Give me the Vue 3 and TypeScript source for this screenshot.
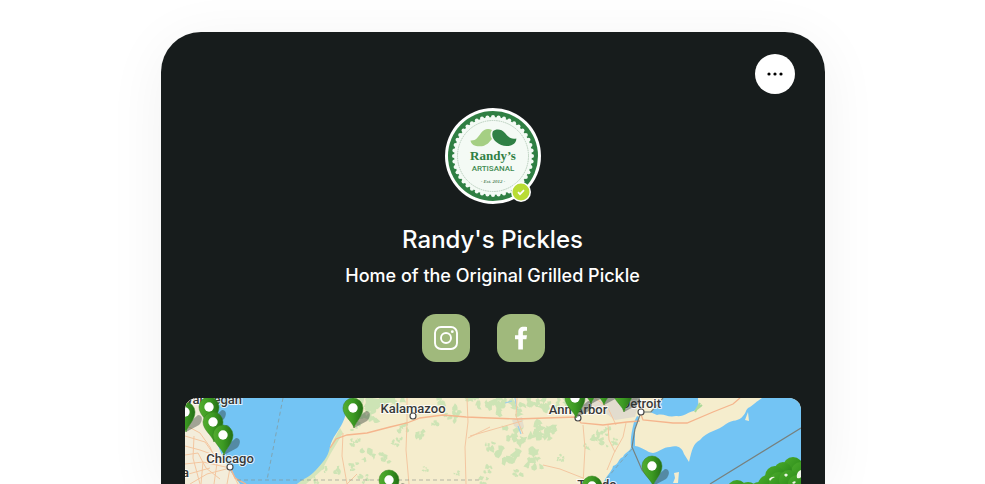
<script setup lang="ts">
interface Point { x: number; y: number }
interface Label extends Point { text: string; anchor: 'start' | 'middle' | 'end' }

const profile = {
  name: "Randy's Pickles",
  tagline: 'Home of the Original Grilled Pickle',
}

const labels: Label[] = [
  { text: 'Waukegan', x: 57, y: 6, anchor: 'end' },
  { text: 'Chicago', x: 45, y: 65, anchor: 'middle' },
  { text: 'Aurora', x: 4, y: 79, anchor: 'end' },
  { text: 'Kalamazoo', x: 228, y: 15, anchor: 'middle' },
  { text: 'Ann Arbor', x: 393, y: 16, anchor: 'middle' },
  { text: 'Detroit', x: 476, y: 10, anchor: 'end' },
  { text: 'Toledo', x: 412, y: 91, anchor: 'middle' },
]

const cities: Point[] = [
  { x: 45, y: 69 },
  { x: 228, y: 18 },
  { x: 393, y: 20 },
  { x: 456, y: 14 },
]

const pins: Point[] = [
  { x: 0, y: 14 }, { x: 24, y: 9 }, { x: 28, y: 24 }, { x: 38, y: 37 },
  { x: 168, y: 10 }, { x: 204, y: 82 },
  { x: 405, y: -14 }, { x: 418, y: -13 }, { x: 438, y: -6 }, { x: 390, y: 0 },
  { x: 407, y: 88 }, { x: 467, y: 68 },
]

// Overlapping pin heads, back to front, where stores sit too close to tell apart
const cluster: Array<Point & { r: number }> = [
  { x: 608, y: 69, r: 10 }, { x: 616, y: 74, r: 10 }, { x: 598, y: 73, r: 9 }, { x: 590, y: 78, r: 10 },
  { x: 552, y: 92, r: 10 }, { x: 563, y: 94, r: 10 }, { x: 574, y: 94, r: 10 }, { x: 583, y: 87, r: 10 },
  { x: 594, y: 84, r: 10 }, { x: 604, y: 82, r: 10 }, { x: 612, y: 86, r: 9 },
]

// Wooded areas over the land
const woods: Array<Point & { s: number }> = [
  { x: 180, y: 4, s: 14 }, { x: 197, y: 8, s: 13 }, { x: 185, y: 17, s: 9 }, { x: 212, y: 7, s: 10 },
  { x: 170, y: 45, s: 5 }, { x: 183, y: 57, s: 7 }, { x: 199, y: 60, s: 6 }, { x: 218, y: 30, s: 6 },
  { x: 232, y: 36, s: 7 }, { x: 212, y: 44, s: 5 }, { x: 268, y: 20, s: 8 }, { x: 249, y: 25, s: 5 },
  { x: 261, y: 3, s: 9 }, { x: 291, y: 5, s: 9 }, { x: 307, y: 8, s: 10 }, { x: 320, y: 4, s: 9 },
  { x: 337, y: 10, s: 10 }, { x: 352, y: 6, s: 9 }, { x: 365, y: 5, s: 9 }, { x: 377, y: 3, s: 7 },
  { x: 344, y: 31, s: 12 }, { x: 328, y: 37, s: 9 }, { x: 355, y: 40, s: 10 }, { x: 339, y: 49, s: 12 },
  { x: 322, y: 57, s: 10 }, { x: 307, y: 49, s: 6 }, { x: 348, y: 62, s: 9 }, { x: 364, y: 33, s: 7 },
  { x: 411, y: 39, s: 8 }, { x: 420, y: 34, s: 5 }, { x: 427, y: 45, s: 5 }, { x: 403, y: 48, s: 4 },
  { x: 302, y: 72, s: 5 }, { x: 297, y: 83, s: 5 }, { x: 169, y: 69, s: 5 }, { x: 178, y: 81, s: 5 },
  { x: 138, y: 72, s: 4 }, { x: 152, y: 73, s: 5 }, { x: 131, y: 82, s: 4 }, { x: 241, y: 71, s: 3 },
  { x: 375, y: 60, s: 4 }, { x: 334, y: 76, s: 5 }, { x: 272, y: 75, s: 3 }, { x: 172, y: 28, s: 5 },
]

// Repeatable pseudo-random sequence, so the woods look the same on every render
let seed = 11
const random = (): number => {
  seed = (seed * 16807) % 2147483647
  return seed / 2147483647
}

// Each wood is a loose group of small ragged blobs
const woodPath: string = woods
  .flatMap(({ x, y, s }) =>
    Array.from({ length: 7 }, () => {
      const cx = x + (random() * 2 - 1) * s
      const cy = y + (random() * 2 - 1) * s * 0.75
      const corners = Array.from({ length: 8 }, (_, i) => {
        const a = (i / 8) * Math.PI * 2
        const r = s * (0.12 + random() * 0.38)
        return `${(cx + Math.cos(a) * r).toFixed(1)} ${(cy + Math.sin(a) * r).toFixed(1)}`
      })
      return `M${corners.join('L')}Z`
    }),
  )
  .join('')

// Rounded teeth around the rim of the seal
const scallops: Point[] = Array.from({ length: 44 }, (_, i) => {
  const a = (i / 44) * Math.PI * 2
  return { x: 48 + 39 * Math.cos(a), y: 48 + 39 * Math.sin(a) }
})
</script>

<template>
  <div class="page">
    <main class="card">
      <header class="toolbar">
        <button class="more" type="button" aria-label="More options">
          <svg viewBox="0 0 16 4" width="16" height="4" aria-hidden="true">
            <circle cx="2" cy="2" r="1.6" /><circle cx="8" cy="2" r="1.6" /><circle cx="14" cy="2" r="1.6" />
          </svg>
        </button>
      </header>

      <div class="avatar">
        <svg class="seal" viewBox="0 0 96 96" role="img" aria-label="Randy's Artisanal">
          <circle cx="48" cy="48" r="48" fill="#fff" />
          <circle cx="48" cy="48" r="45" fill="#2f7f43" />
          <circle cx="48" cy="48" r="39" fill="#f4faf5" />
          <circle v-for="(p, i) in scallops" :key="i" :cx="p.x" :cy="p.y" r="2" fill="#f4faf5" />
          <circle cx="48" cy="48" r="35.5" fill="none" stroke="#a9c3ae" stroke-width=".8" stroke-dasharray="1.6 .7" />
          <path d="M25.500 32.500C31 33 33 29 36 25C39 21 43 20 47 22C45 24.500 45 28 47 31C45 33 43 37 37 38.200C31 39 26 37 25.500 32.500Z" fill="#a5cf83" />
          <path d="M47.800 23.500C51 20.500 56.500 21 60 25C63 28.500 65 31.500 71.300 30.500C71.500 35 67.500 38.300 61.500 38C53 37.500 45 30.500 47.800 23.500Z" fill="#2f8045" />
          <text class="seal-name" x="48" y="52" text-anchor="middle">Randy’s</text>
          <text class="seal-kind" x="48" y="63" text-anchor="middle">ARTISANAL</text>
          <text class="seal-date" x="48" y="75" text-anchor="middle">· Est. 2012 ·</text>
        </svg>
        <svg class="verified" viewBox="0 0 20 20" role="img" aria-label="Verified">
          <circle cx="10" cy="10" r="10" fill="#fff" />
          <circle cx="10" cy="10" r="8.500" fill="#b9dc35" />
          <path d="M7 10.200L9 12.200L13 8.200" fill="none" stroke="#fff" stroke-width="1.700" />
        </svg>
      </div>

      <h1 class="name">{{ profile.name }}</h1>
      <p class="tagline">{{ profile.tagline }}</p>

      <nav class="socials" aria-label="Social links">
        <a class="social" href="#instagram" aria-label="Instagram">
          <svg viewBox="0 0 24 24" width="24" height="24" fill="none" stroke="#fff" stroke-width="1.900" aria-hidden="true">
            <rect x="1" y="1" width="22" height="22" rx="6" />
            <circle cx="12" cy="12" r="5" />
            <circle cx="18.300" cy="5.700" r="1.400" fill="#fff" stroke="none" />
          </svg>
        </a>
        <a class="social" href="#facebook" aria-label="Facebook">
          <svg viewBox="0 0 24 24" width="24" height="24" fill="#fff" aria-hidden="true">
            <path d="M9.300 23.500V13.200H6V9.200H9.300V6.200C9.300 2.700 11.300 .800 14.600 .800C16 .800 17.200 .900 18 1.100V4.700H15.900C14.200 4.700 13.900 5.500 13.900 6.700V9.200H18L17.400 13.200H13.900V23.500Z" />
          </svg>
        </a>
      </nav>

      <svg class="map" viewBox="0 0 616 86" role="img" aria-label="Store locations map">
        <defs>
          <linearGradient id="pinFill" x1="0" x2="1" y1="0" y2="0">
            <stop offset="0" stop-color="#54ad31" /><stop offset=".5" stop-color="#3c9a22" /><stop offset="1" stop-color="#246f16" />
          </linearGradient>
          <linearGradient id="headFill" x1="0" x2="1" y1="0" y2="1">
            <stop offset="0" stop-color="#4cab2c" /><stop offset=".5" stop-color="#379720" /><stop offset="1" stop-color="#267a18" />
          </linearGradient>
          <g id="pin">
            <path d="M1 20L6 9L13 3C18 3 18 9 14 13Z" fill="#26352d" opacity=".4" />
            <path d="M1 20C-1 13-10 8-10 0A10 10 0 0 1 10 0C10 8 3 13 1 20Z" fill="url(#pinFill)" stroke="#34831f" stroke-width=".5" />
            <circle r="4.700" fill="#fff" />
          </g>
        </defs>

        <rect width="616" height="86" fill="#f5edcd" />
        <path :d="woodPath" fill="#bfe0ac" opacity=".75" />
        <path d="M0 0H20L30 40L40 58L52 86H0Z" fill="#f3eddb" />
        <path d="M380 0H455L450 19L430 22L419 14L402 10Z" fill="#e2dcce" />
        <path d="M327 22L337 19L339 29L334 31L329 28Z" fill="#e5ddca" />
        <path d="M155 30L145 49L132 68L112 86H121L137 72L146 55L158 35Z" fill="#d4e5ba" />

        <g fill="#73c4f4">
          <path d="M19 0H168C161 8 162 16 158 24C154 33 147 39 145 49C143 60 137 65 131 72C125 79 119 80 112 86H55C50 78 45 75 42 66C36 58 35 50 30 42C25 31 25 15 19 0Z" />
          <path d="M418 86C421 77 427 74 428 68C434 67 433 60 438 59C440 54 445 54 446 49C445 41 447 32 449 24L452 18L454 19L450 30L450 48C458 49 461 54 468 55C474 54 478 49 485 49C492 47 497 49 499 56L504 64C507 51 508 46 515 42C522 33 533 33 541 26C548 21 554 24 558 18C562 14 560 11 565 9C569 6 571 4 577 0H616V86Z" />
          <path d="M478 0C474 5 471 10 465 14L472 17C480 15 482 20 491 18C500 19 502 14 509 13C515 9 513 4 513 0Z" />
        </g>
        <path d="M330 0L332 12M320 5L327 3M333 28L336 36" fill="none" stroke="#9fcfe6" stroke-width="1.200" />
        <path d="M515 5L510 14M517 7L512 11" stroke="#a9d998" stroke-width="2" />
        <path d="M489 75L494 74L493 85H488L490 80ZM563 14L564 23L560 22Z" fill="#f5edcd" />

        <g fill="none" stroke="#f3c6a0" stroke-width="1">
          <path d="M0 48L15 52L29 57L45 64M0 66L18 64L45 70M5 86L22 76L45 70L42 86M0 27L15 35L25 49L32 65L29 86M9 38L8 60L15 86M45 70L53 86M0 57L13 55L21 70L35 81" />
          <path d="M158 35L157 58L162 86M162 86L172 76M222 0L222 24L221 52L224 86M282 0L283 24L280 49L281 86M305 29L283 40M332 0L331 18L338 36" />
          <path d="M398 27L400 50L398 86M423 27L424 42L430 54M358 67L375 71L398 80M441 25L438 39L429 55L422 72M410 0L423 10L431 27M285 38L320 28L337 23" />
          <path d="M0 38L20 44L30 58M18 64L16 86M0 77L25 70" />
        </g>
        <g fill="none" stroke="#f5b58d" stroke-width="1.300">
          <path d="M145 50L151 41L162 37L182 35L205 29L222 25L235 20L258 17L281 19L305 20L331 21L361 20L392 19L396 25L418 27L442 24L455 23" />
          <path d="M455 14L458 22L488 25L502 25L528 14L548 6L555 0" />
          <path d="M45 69L50 80L61 86" />
        </g>
        <path d="M98 0L82 82M52 82H297M447 51L417 86" fill="none" stroke="#888f87" stroke-width=".8" stroke-dasharray="4 3" opacity=".75" />
        <path d="M478 0L466 14L456 14L450 31L447 49L457 72L469 86M525 86L616 30" fill="none" stroke="#77817e" stroke-width="1.200" />

        <g class="places">
          <text v-for="l in labels" :key="l.text" :x="l.x" :y="l.y" :text-anchor="l.anchor">{{ l.text }}</text>
        </g>
        <circle v-for="(c, i) in cities" :key="i" :cx="c.x" :cy="c.y" r="3" fill="#fff" stroke="#4a4a4a" stroke-width="1.200" />
        <use v-for="(p, i) in pins" :key="i" href="#pin" :transform="`translate(${p.x} ${p.y})`" />
        <circle v-for="(h, i) in cluster" :key="i" :cx="h.x" :cy="h.y" :r="h.r" fill="url(#headFill)" />
        <path d="M584 81Q587 78 590 79Q587 80 585 83ZM599 77Q601 74 603 77L601 79ZM614 73Q611 76 612 80Q615 81 616 79V72ZM607 85Q609 82 611 84L609 86Z" fill="#eef6e6" />
      </svg>
    </main>
  </div>
</template>

<style>
body {
  margin: 0;
  background: #fff;
}
</style>

<style scoped>
.page {
  box-sizing: border-box;
  min-height: 100vh;
  padding-top: 32px;
  display: flex;
  justify-content: center;
  overflow: hidden;
  font-family: Inter, "Liberation Sans", sans-serif;
}

.card {
  box-sizing: border-box;
  width: 100%;
  max-width: 664px;
  padding: 22px 24px 0;
  display: flex;
  flex-direction: column;
  align-items: center;
  background: #171c1c;
  color: #fff;
  border-radius: 40px 40px 0 0;
  box-shadow: 0 10px 60px rgba(0, 0, 0, 0.06);
}

.toolbar {
  align-self: stretch;
  display: flex;
  justify-content: flex-end;
  padding-right: 6px;
}

.more {
  width: 40px;
  height: 40px;
  padding: 0;
  display: grid;
  place-items: center;
  border: 0;
  border-radius: 50%;
  background: #fff;
  cursor: pointer;
}

.avatar {
  position: relative;
  width: 96px;
  height: 96px;
  margin-top: 14px;
}

.seal {
  display: block;
  width: 100%;
}

.seal-name {
  font: bold 13px "Liberation Serif", serif;
  fill: #2f7f43;
}

.seal-kind {
  font: 500 8px Roboto, sans-serif;
  fill: #3f8a52;
}

.seal-date {
  font: italic bold 5px "Liberation Serif", serif;
  fill: #57885f;
}

.verified {
  position: absolute;
  right: 10px;
  bottom: 2px;
  width: 20px;
  height: 20px;
}

.name {
  margin: 20px 0 0;
  font-size: 24px;
  line-height: 32px;
  font-weight: 500;
  text-align: center;
}

.tagline {
  margin: 8px 0 0;
  font-size: 18px;
  line-height: 24px;
  font-weight: 500;
  text-align: center;
}

.socials {
  display: flex;
  gap: 27px;
  margin-top: 26px;
  padding-right: 18px;
}

.social {
  width: 48px;
  height: 48px;
  display: grid;
  place-items: center;
  border-radius: 14px;
  background: #a0b97c;
}

.map {
  display: block;
  width: 100%;
  margin-top: 36px;
  border-radius: 12px 12px 0 0;
}

.places text {
  font: 500 13px Roboto, sans-serif;
  fill: #383838;
  stroke: #fff;
  stroke-width: 2px;
  stroke-opacity: 0.8;
  paint-order: stroke;
}
</style>
